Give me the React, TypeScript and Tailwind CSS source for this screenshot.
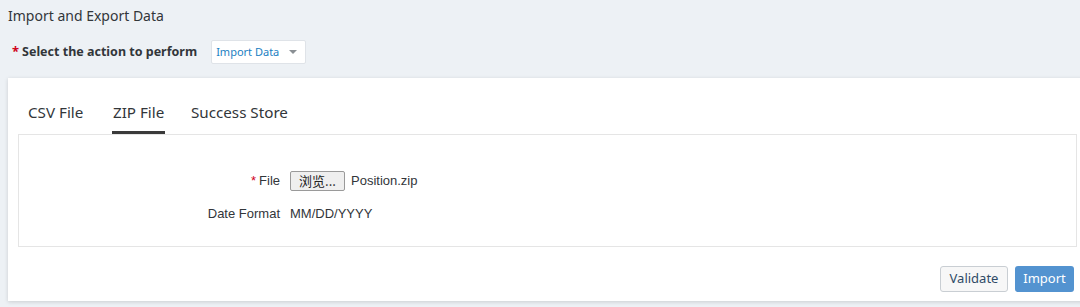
export default function App() {
  return (
    <div className="w-[1080px] h-[307px] overflow-hidden bg-[#edf1f5] relative" style={{ fontFamily: '"Noto Sans", "Open Sans", Arial, sans-serif' }}>
      <div className="h-[32px] pl-[8px] pt-[6px] text-[14px] leading-[20px] text-[#32363a]">Import and Export Data</div>
      <div className="flex items-center h-[40px] pl-[12px]">
        <span className="text-[#d0021b] text-[13px] font-bold mr-[3px]">*</span>
        <span className="text-[12.5px] font-bold text-[#32363a]">Select the action to perform</span>
        <div className="ml-[14px] w-[95px] h-[24px] bg-white border border-[#dfe3e8] rounded-[2px] flex items-center justify-between pl-[4px] pr-[8px]">
          <span className="text-[11px] text-[#1a80c2]">Import Data</span>
          <svg width="8" height="5" viewBox="0 0 8 5"><path d="M0 0 L8 0 L4 4 Z" fill="#8a8f94" /></svg>
        </div>
      </div>
      <div className="ml-[8px] mt-[6px] w-[1090px] h-[223px] bg-white shadow-[0_1px_4px_rgba(0,0,0,0.15)]">
        <div className="flex pl-[20px] pt-[23px] h-[56px] text-[15.2px] leading-[22px] text-[#32363a]">
          <div className="w-[85px]">CSV File</div>
          <div className="w-[78px] flex flex-col">
            <span>ZIP File</span>
            <div className="mt-[8px] -ml-[1px] h-[3px] w-[53px] bg-[#3a3a3a]" />
          </div>
          <div>Success Store</div>
        </div>
        <div className="ml-[10px] w-[1059px] h-[113px] border border-[#e5e5e5] pt-[35px]" style={{ fontFamily: '"Liberation Sans", Arial, sans-serif' }}>
          <div className="flex items-center h-[22px]">
            <div className="w-[261px] text-right text-[13px] text-[#32363a]"><span className="text-[#d0021b] mr-[3px]">*</span>File</div>
            <div className="ml-[10px] h-[20px] w-[55px] bg-[#efefef] border border-[#9a9a9a] rounded-[2px] flex items-center justify-center text-[13px] text-[#222]" style={{ fontFamily: '"Noto Sans CJK SC", sans-serif' }}>浏览...</div>
            <span className="ml-[6px] text-[13px] text-[#32363a]">Position.zip</span>
          </div>
          <div className="flex items-center h-[22px] mt-[11px]">
            <div className="w-[261px] text-right text-[13px] text-[#32363a]">Date Format</div>
            <span className="ml-[10px] text-[13px] text-[#32363a]">MM/DD/YYYY</span>
          </div>
        </div>
        <div className="flex w-[1066px] justify-end pt-[19px] gap-[7px] text-[13px]">
          <div className="h-[26px] w-[68px] border border-[#c9ced3] bg-[#f7f7f7] rounded-[3px] flex items-center justify-center text-[#2f4a66]">Validate</div>
          <div className="h-[26px] w-[59px] bg-[#5393d0] rounded-[3px] flex items-center justify-center text-white">Import</div>
        </div>
      </div>
    </div>
  );
}
